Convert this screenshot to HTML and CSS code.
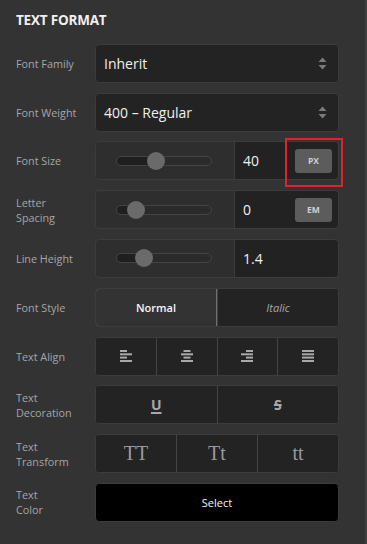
FILE: index.html
```html
<!DOCTYPE html>
<html lang="en">
<head>
    <meta charset="UTF-8">
    <meta name="viewport" content="width=device-width, initial-scale=1.0">
    <title>Text Format</title>
    <link rel="stylesheet" href="styles.css">
</head>
<body>
    <div class="panel">
        <h2 class="panel-title">TEXT FORMAT</h2>

        <div class="row">
            <label class="label">Font Family</label>
            <div class="select">
                <span>Inherit</span>
                <svg class="arrows" width="9" height="13" viewBox="0 0 9 13">
                    <path d="M4.5 0.5 L8.5 5 L0.5 5 Z" fill="#7a7a7a"/>
                    <path d="M4.5 12.5 L8.5 8 L0.5 8 Z" fill="#7a7a7a"/>
                </svg>
            </div>
        </div>

        <div class="row">
            <label class="label">Font Weight</label>
            <div class="select">
                <span>400 – Regular</span>
                <svg class="arrows" width="9" height="13" viewBox="0 0 9 13">
                    <path d="M4.5 0.5 L8.5 5 L0.5 5 Z" fill="#7a7a7a"/>
                    <path d="M4.5 12.5 L8.5 8 L0.5 8 Z" fill="#7a7a7a"/>
                </svg>
            </div>
        </div>

        <div class="row">
            <label class="label">Font Size</label>
            <div class="range-box">
                <div class="range-cell">
                    <div class="track" style="--pos: 41%">
                        <span class="thumb"></span>
                    </div>
                </div>
                <div class="number-cell">
                    <span class="number">40</span>
                    <span class="unit">PX</span>
                    <span class="highlight"></span>
                </div>
            </div>
        </div>

        <div class="row">
            <label class="label">Letter<br>Spacing</label>
            <div class="range-box">
                <div class="range-cell">
                    <div class="track" style="--pos: 20%">
                        <span class="thumb"></span>
                    </div>
                </div>
                <div class="number-cell">
                    <span class="number">0</span>
                    <span class="unit">EM</span>
                </div>
            </div>
        </div>

        <div class="row">
            <label class="label">Line Height</label>
            <div class="range-box">
                <div class="range-cell">
                    <div class="track" style="--pos: 29%">
                        <span class="thumb"></span>
                    </div>
                </div>
                <div class="number-cell">
                    <span class="number">1.4</span>
                </div>
            </div>
        </div>

        <div class="row">
            <label class="label">Font Style</label>
            <div class="segments">
                <button class="seg active">Normal</button>
                <button class="seg italic">Italic</button>
            </div>
        </div>

        <div class="row">
            <label class="label">Text Align</label>
            <div class="segments">
                <button class="seg">
                    <svg width="12" height="12" viewBox="0 0 12 12" fill="#a8a8a8">
                        <rect x="0" y="0" width="7" height="2"/>
                        <rect x="0" y="3.3" width="12" height="2"/>
                        <rect x="0" y="6.6" width="7" height="2"/>
                        <rect x="0" y="10" width="12" height="2"/>
                    </svg>
                </button>
                <button class="seg">
                    <svg width="12" height="12" viewBox="0 0 12 12" fill="#a8a8a8">
                        <rect x="2.5" y="0" width="7" height="2"/>
                        <rect x="0" y="3.3" width="12" height="2"/>
                        <rect x="2.5" y="6.6" width="7" height="2"/>
                        <rect x="0" y="10" width="12" height="2"/>
                    </svg>
                </button>
                <button class="seg">
                    <svg width="12" height="12" viewBox="0 0 12 12" fill="#a8a8a8">
                        <rect x="5" y="0" width="7" height="2"/>
                        <rect x="0" y="3.3" width="12" height="2"/>
                        <rect x="5" y="6.6" width="7" height="2"/>
                        <rect x="0" y="10" width="12" height="2"/>
                    </svg>
                </button>
                <button class="seg">
                    <svg width="12" height="12" viewBox="0 0 12 12" fill="#a8a8a8">
                        <rect x="0" y="0" width="12" height="2"/>
                        <rect x="0" y="3.3" width="12" height="2"/>
                        <rect x="0" y="6.6" width="12" height="2"/>
                        <rect x="0" y="10" width="12" height="2"/>
                    </svg>
                </button>
            </div>
        </div>

        <div class="row">
            <label class="label">Text<br>Decoration</label>
            <div class="segments">
                <button class="seg deco"><span class="underline">U</span></button>
                <button class="seg deco"><span class="strike">S</span></button>
            </div>
        </div>

        <div class="row">
            <label class="label">Text<br>Transform</label>
            <div class="segments">
                <button class="seg transform">TT</button>
                <button class="seg transform">Tt</button>
                <button class="seg transform">tt</button>
            </div>
        </div>

        <div class="row">
            <label class="label">Text<br>Color</label>
            <button class="color-btn">Select</button>
        </div>
    </div>
</body>
</html>
```

FILE: styles.css
```css
body {
    margin: 0;
    padding: 0;
    background-color: #333333;
    font-family: "Open Sans", "Noto Sans", Arial, sans-serif;
    color: #a8a8a8;
}

.panel {
    width: 367px;
    height: 544px;
    box-sizing: border-box;
    padding: 11px 26px 0 16px;
    border-right: 2px solid #3f3f3f;
    display: flex;
    flex-direction: column;
    gap: 9.8px;
}

.panel-title {
    margin: 0 0 5px 0;
    font-size: 13.5px;
    font-weight: 700;
    color: #f0f0f0;
    letter-spacing: -0.2px;
}

.row {
    display: grid;
    grid-template-columns: 79px 1fr;
    align-items: center;
    height: 39px;
}

.label {
    font-size: 10.8px;
    line-height: 15px;
    color: #a6a6a6;
}

.select {
    height: 39px;
    box-sizing: border-box;
    background-color: #232323;
    border: 1px solid #3c3c3c;
    border-radius: 4px;
    display: flex;
    align-items: center;
    justify-content: space-between;
    padding: 0 11px 0 8px;
    font-size: 14px;
    color: #f0f0f0;
}

.range-box {
    height: 39px;
    box-sizing: border-box;
    border: 1px solid #3c3c3c;
    border-radius: 4px;
    display: flex;
}

.range-cell {
    width: 139px;
    background-color: #2e2e2e;
    border-radius: 4px 0 0 4px;
    display: flex;
    align-items: center;
    padding: 0 22px 0 20px;
    box-sizing: border-box;
    border-right: 1px solid #3c3c3c;
}

.track {
    position: relative;
    flex: 1;
    height: 10px;
    box-sizing: border-box;
    border: 1px solid #444;
    border-radius: 5px;
    background: linear-gradient(to right, #1f1f1f var(--pos), #2b2b2b var(--pos));
}

.thumb {
    position: absolute;
    left: var(--pos);
    top: 50%;
    width: 18px;
    height: 18px;
    margin: -9px 0 0 -9px;
    border-radius: 50%;
    background-color: #6a6a6a;
}

.number-cell {
    position: relative;
    flex: 1;
    background-color: #222222;
    border-radius: 0 4px 4px 0;
    display: flex;
    align-items: center;
    justify-content: space-between;
    padding: 0 6px 0 8px;
}

.number {
    font-size: 14px;
    color: #f0f0f0;
}

.unit {
    width: 37px;
    height: 24px;
    border-radius: 3px;
    background-color: #5c5c5c;
    color: #d0d0d0;
    font-size: 8.5px;
    font-weight: 700;
    display: flex;
    align-items: center;
    justify-content: center;
}

.highlight {
    position: absolute;
    right: -5px;
    top: -4px;
    width: 58px;
    height: 49px;
    box-sizing: border-box;
    border: 2px solid #e3212b;
}

.segments {
    height: 39px;
    box-sizing: border-box;
    border: 1px solid #3c3c3c;
    border-radius: 4px;
    display: flex;
    overflow: hidden;
    background-color: #232323;
}

.seg {
    flex: 1;
    border: none;
    border-left: 1px solid #444;
    background-color: #232323;
    color: #a8a8a8;
    font-family: inherit;
    font-size: 11px;
    display: flex;
    align-items: center;
    justify-content: center;
    padding: 0;
    cursor: pointer;
}

.seg:first-child {
    border-left: none;
}

.seg.active {
    background-color: #333333;
    color: #f5f5f5;
    font-weight: 600;
    border: 1px solid #6e6e6e;
    border-radius: 4px 0 0 4px;
    margin: -1px 0 -1px -1px;
}

.seg.italic {
    font-style: italic;
}

.deco span {
    font-size: 14px;
    font-weight: 700;
    color: #a8a8a8;
}

.underline {
    text-decoration: underline;
    text-decoration-thickness: 2px;
    text-underline-offset: 2px;
}

.strike {
    text-decoration: line-through;
    text-decoration-thickness: 2px;
}

.transform {
    font-family: "Liberation Serif", "Times New Roman", serif;
    font-size: 20px;
    color: #9a9a9a;
}

.color-btn {
    height: 39px;
    box-sizing: border-box;
    background-color: #000;
    border: 1px solid #3c3c3c;
    border-radius: 4px;
    color: #f5f5f5;
    font-family: inherit;
    font-size: 11px;
    cursor: pointer;
}
```
